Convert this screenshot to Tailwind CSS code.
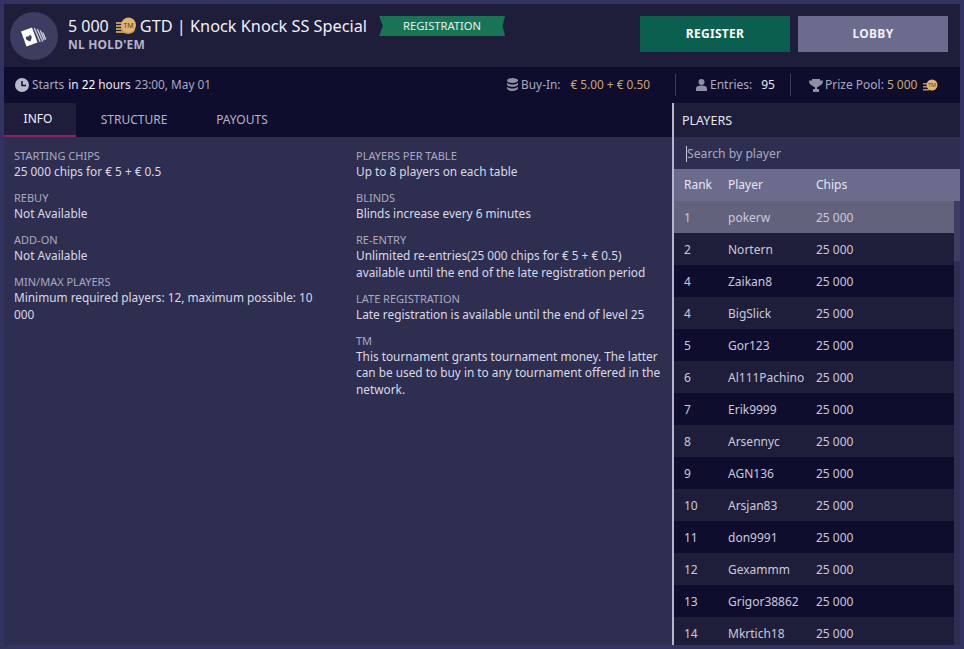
<!DOCTYPE html>
<html lang="en">
<head>
  <meta charset="UTF-8">
  <title>Knock Knock SS Special</title>
  <script src="https://cdn.jsdelivr.net/npm/@tailwindcss/browser@4"></script>
</head>
<body class="w-[964px] h-[649px] overflow-hidden bg-[#33335f] font-['Noto_Sans',sans-serif] text-[11.84px] text-[#d9d9e6]">
  <div class="w-full h-full border-4 border-[#33335f] flex flex-col overflow-hidden">

    <!-- Header -->
    <div class="h-[63px] shrink-0 bg-[#1e1e3a] flex items-center pl-[6px] pr-[12px]">
      <div class="w-[48px] h-[48px] rounded-full bg-[#3c3d60] shrink-0">
        <svg class="w-[48px] h-[48px]" viewBox="0 0 48 48">
          <g fill="none" stroke="#c9c9d8" stroke-width="1.4" stroke-linecap="round">
            <path d="M24.500 16.500l5.500 13"/><path d="M27.500 17.500l5 11.500"/><path d="M30.500 19l3.500 8.500"/><path d="M33 21l2.500 6"/>
          </g>
          <path d="M11 19.500l11-4 5.500 15-11 4z" fill="#fff"/>
          <path d="M20.200 29.500c-2.700-1-4.200-1.800-4.400-3.300-.2-1.300 1.300-2.100 2.500-1.300.1-1.400 1.800-2.100 2.800-1.200 1.200 1.100.6 2.900-.9 5.800z" fill="#3c3d60"/>
        </svg>
      </div>
      <div class="ml-[10px] -mt-[3px] shrink-0">
        <div class="flex items-center text-[16.300px] leading-[22px] text-[#f0f0f6]">
          <span class="text-[16px]">5 000</span>
          <svg class="w-[21px] h-[18px] ml-[7px] mr-[3px]" viewBox="0 0 21 18">
            <g fill="#b8935a"><rect x="0" y="5" width="8" height="2"/><rect x="0" y="8" width="8" height="2"/><rect x="0" y="11" width="8" height="2"/><rect x="0" y="14" width="8" height="2"/></g>
            <ellipse cx="12" cy="12" rx="7" ry="5" fill="#c49f63"/>
            <circle cx="12.500" cy="8" r="7.500" fill="#e0b36e"/>
            <text x="12.500" y="10.500" font-size="7" text-anchor="middle" fill="#5e4420" font-family="Noto Sans">TM</text>
          </svg>
          <span>GTD | Knock Knock SS Special</span>
        </div>
        <div class="text-[12px] leading-[16px] font-bold text-[#b4b4c8] tracking-[0.2px]">NL HOLD'EM</div>
      </div>
      <div class="ml-[12px] -mt-[19px] w-[126px] h-[20px] bg-[#177555] text-[#e6f0ec] text-[11.200px] leading-[20px] text-center [clip-path:polygon(0_0,100%_0,98%_50%,100%_100%,0_100%,3%_50%)]">REGISTRATION</div>
      <div class="ml-auto flex gap-[8px] -mt-[3px]">
        <div class="w-[150px] h-[36px] bg-[#0b5f4e] text-white font-bold text-[12px] tracking-[0.3px] flex items-center justify-center">REGISTER</div>
        <div class="w-[150px] h-[36px] bg-[#6b6b8e] text-[#f0f0f6] font-bold text-[12px] tracking-[0.3px] flex items-center justify-center">LOBBY</div>
      </div>
    </div>

    <!-- Info bar -->
    <div class="h-[36px] shrink-0 bg-[#0f0d2e] flex items-center pl-[11px] text-[#a9a9bf]">
      <svg class="w-[14px] h-[14px] mr-[3px]" viewBox="0 0 14 14"><circle cx="7" cy="7" r="7" fill="#b9b9cc"/><path d="M7 3v4.500h4" fill="none" stroke="#0f0d2e" stroke-width="1.500"/></svg>
      <span>Starts</span><span class="ml-[4px] text-[#e6e6f0]">in <span class="text-white">22</span> hours</span><span class="ml-[4px]">23:00, May 01</span>

      <div class="ml-[296px] flex items-center">
        <svg class="w-[11px] h-[13px] mr-[3px]" viewBox="0 0 11 13" fill="#8f8fa6"><ellipse cx="5.500" cy="2.500" rx="5.500" ry="2.500"/><path d="M0 4.500c1 1.500 3 2 5.500 2s4.500-.5 5.500-2v2c-.5 1.500-3 2.300-5.500 2.300S.5 8 0 6.500z"/><path d="M0 8.500c1 1.500 3 2 5.500 2s4.500-.5 5.500-2v2c-.5 1.500-3 2.500-5.500 2.500S.5 12 0 10.500z"/></svg>
        <span>Buy-In:</span><span class="ml-[10px] text-[#c9a76c]">€ 5.00 + € 0.50</span>
      </div>
      <div class="ml-[25px] w-px h-[22px] bg-[#3c3c58]"></div>
      <div class="ml-[20px] flex items-center text-[12px]">
        <svg class="w-[11px] h-[12px] mr-[3px]" viewBox="0 0 11 12" fill="#8f8fa6"><circle cx="5.500" cy="3" r="3"/><path d="M0 12V9.500C0 7.500 2 6.500 5.500 6.500S11 7.500 11 9.500V12z"/></svg>
        <span>Entries:</span><span class="ml-[9px] text-[#e6e6f0]">95</span>
      </div>
      <div class="ml-[15px] w-px h-[22px] bg-[#3c3c58]"></div>
      <div class="ml-[18px] flex items-center text-[12px]">
        <svg class="w-[14px] h-[13px] mr-[2px]" viewBox="0 0 14 13" fill="#8f8fa6"><path d="M3 0h8v1.500h3c0 3-1.200 4.500-3.500 5C10 7.500 9 8 8 8.300V10h2v3H4v-3h2V8.300C5 8 4 7.500 3.500 6.500 1.200 6 0 4.500 0 1.500h3z"/></svg>
        <span>Prize Pool:</span><span class="ml-[3px] text-[#c9a76c]">5 000</span>
        <svg class="w-[15px] h-[13px] ml-[6px]" viewBox="0 0 15 13">
          <g fill="#b8935a"><rect x="0" y="4" width="6" height="1.500"/><rect x="0" y="7" width="6" height="1.500"/><rect x="0" y="10" width="6" height="1.500"/></g>
          <circle cx="9" cy="6" r="5.500" fill="#e0b36e"/>
          <text x="9" y="8" font-size="5.500" text-anchor="middle" fill="#5e4420" font-family="Noto Sans">TM</text>
        </svg>
      </div>
    </div>

    <!-- Body -->
    <div class="flex-1 flex min-h-0">

      <!-- Left column -->
      <div class="w-[668px] shrink-0 flex flex-col bg-[#2e2f50]">
        <div class="h-[34px] shrink-0 bg-[#0f0d2e] flex text-[12px] text-[#b4b4c8]">
          <div class="w-[72px] bg-[#1e1e3a] border-b-2 border-[#8c1f6e] text-[#f0f0f6] flex items-center justify-center pr-[4px]">INFO</div>
          <div class="w-[116px] flex items-center justify-center">STRUCTURE</div>
          <div class="w-[100px] flex items-center justify-center">PAYOUTS</div>
        </div>
        <div class="flex pl-[10px] pt-[11px] leading-[16.500px] [&_p]:-mt-[1px] [&_p]:mb-[10.500px] [&_h4]:text-[11px] [&_h4]:leading-[16px] [&_h4]:text-[#a9a9bf]">
          <div class="w-[342px] pr-[40px]">
            <h4>STARTING CHIPS</h4><p>25 000 chips for € 5 + € 0.5</p>
            <h4>REBUY</h4><p>Not Available</p>
            <h4>ADD-ON</h4><p>Not Available</p>
            <h4>MIN/MAX PLAYERS</h4><p>Minimum required players: 12, maximum possible: 10 000</p>
          </div>
          <div class="w-[306px]">
            <h4>PLAYERS PER TABLE</h4><p>Up to 8 players on each table</p>
            <h4>BLINDS</h4><p>Blinds increase every 6 minutes</p>
            <h4>RE-ENTRY</h4><p>Unlimited re-entries(25 000 chips for € 5 + € 0.5) available until the end of the late registration period</p>
            <h4>LATE REGISTRATION</h4><p>Late registration is available until the end of level 25</p>
            <h4>TM</h4><p>This tournament grants tournament money. The latter can be used to buy in to any tournament offered in the network.</p>
          </div>
        </div>
      </div>

      <!-- Players -->
      <div class="flex-1 flex flex-col border-l-2 border-[#b5b5d0] min-w-0">
        <div class="h-[34px] shrink-0 bg-[#1e1e3a] flex items-center pl-[8px] pt-[2px] text-[12.500px] text-[#e6e6f0]">PLAYERS</div>
        <div class="h-[32px] shrink-0 bg-[#2e2f50] flex items-center pl-[12px] pt-[1px] text-[12.200px] text-[#a9a9bf]"><span class="border-l border-[#c9c9d8] leading-[16px]">Search by player</span></div>
        <div class="h-[32px] shrink-0 bg-[#6b6b8e] flex items-center text-[12px] text-[#e6e6f0]">
          <span class="w-[44px] pl-[10px] box-content">Rank</span><span class="w-[88px]">Player</span><span>Chips</span>
        </div>
        <div class="flex-1 min-h-0 flex overflow-hidden">
          <div class="flex-1 min-w-0 text-[12px] text-[#c9c9d8] [&>div]:pt-[2px]">
            <div class="h-[32px] flex items-center bg-[#62627c]"><span class="w-[44px] pl-[10px] box-content">1</span><span class="w-[88px]">pokerw</span><span>25 000</span></div>
            <div class="h-[32px] flex items-center bg-[#1e1e3a]"><span class="w-[44px] pl-[10px] box-content">2</span><span class="w-[88px]">Nortern</span><span>25 000</span></div>
            <div class="h-[32px] flex items-center bg-[#0f0d2e]"><span class="w-[44px] pl-[10px] box-content">4</span><span class="w-[88px]">Zaikan8</span><span>25 000</span></div>
            <div class="h-[32px] flex items-center bg-[#1e1e3a]"><span class="w-[44px] pl-[10px] box-content">4</span><span class="w-[88px]">BigSlick</span><span>25 000</span></div>
            <div class="h-[32px] flex items-center bg-[#0f0d2e]"><span class="w-[44px] pl-[10px] box-content">5</span><span class="w-[88px]">Gor123</span><span>25 000</span></div>
            <div class="h-[32px] flex items-center bg-[#1e1e3a]"><span class="w-[44px] pl-[10px] box-content">6</span><span class="w-[88px]">Al111Pachino</span><span>25 000</span></div>
            <div class="h-[32px] flex items-center bg-[#0f0d2e]"><span class="w-[44px] pl-[10px] box-content">7</span><span class="w-[88px]">Erik9999</span><span>25 000</span></div>
            <div class="h-[32px] flex items-center bg-[#1e1e3a]"><span class="w-[44px] pl-[10px] box-content">8</span><span class="w-[88px]">Arsennyc</span><span>25 000</span></div>
            <div class="h-[32px] flex items-center bg-[#0f0d2e]"><span class="w-[44px] pl-[10px] box-content">9</span><span class="w-[88px]">AGN136</span><span>25 000</span></div>
            <div class="h-[32px] flex items-center bg-[#1e1e3a]"><span class="w-[44px] pl-[10px] box-content">10</span><span class="w-[88px]">Arsjan83</span><span>25 000</span></div>
            <div class="h-[32px] flex items-center bg-[#0f0d2e]"><span class="w-[44px] pl-[10px] box-content">11</span><span class="w-[88px]">don9991</span><span>25 000</span></div>
            <div class="h-[32px] flex items-center bg-[#1e1e3a]"><span class="w-[44px] pl-[10px] box-content">12</span><span class="w-[88px]">Gexammm</span><span>25 000</span></div>
            <div class="h-[32px] flex items-center bg-[#0f0d2e]"><span class="w-[44px] pl-[10px] box-content">13</span><span class="w-[88px]">Grigor38862</span><span>25 000</span></div>
            <div class="h-[32px] flex items-center bg-[#1e1e3a]"><span class="w-[44px] pl-[10px] box-content">14</span><span class="w-[88px]">Mkrtich18</span><span>25 000</span></div>
          </div>
          <!-- scrollbar -->
          <div class="w-[6px] shrink-0 bg-[#2e2f50]"><div class="h-[60px] bg-[#3c3d60]"></div></div>
        </div>
      </div>
    </div>
  </div>
</body>
</html>
